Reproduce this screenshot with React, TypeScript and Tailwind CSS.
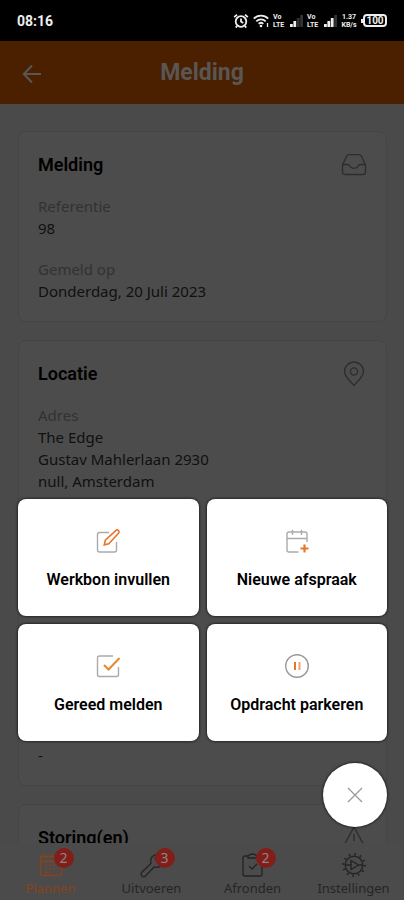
import React from 'react';

interface Field {
  label: string;
  lines: string[];
}

const melding: Field[] = [
  { label: 'Referentie', lines: ['98'] },
  { label: 'Gemeld op', lines: ['Donderdag, 20 Juli 2023'] },
];

// Empty strings keep their row, so unfilled fields still take up space
const locatie: Field[] = [
  { label: 'Adres', lines: ['The Edge', 'Gustav Mahlerlaan 2930', 'null, Amsterdam'] },
  { label: '', lines: [''] },
  { label: '', lines: ['', 'willem hendriks'] },
  { label: '', lines: [''] },
  { label: '', lines: ['-'] },
];

const VoLte = () => (
  <div className="w-[13px] font-[Roboto] text-[7px] leading-[8px] font-bold">
    <div>Vo</div>
    <div>LTE</div>
  </div>
);

const Signal = ({ bars }: { bars: number }) => (
  <svg className="w-[13px] h-3" viewBox="0 0 13 12">
    {[0, 1, 2, 3].map((i) => (
      <rect key={i} x={i * 3.4} y={9 - i * 3} width="2.8" height={3 + i * 3} fill={i < bars ? '#eee' : '#333'} />
    ))}
  </svg>
);

const StatusBar = () => (
  <div className="h-[41px] shrink-0 bg-black text-[#eee] flex items-center justify-between px-[17px]">
    <span className="font-[Roboto] text-sm font-bold">08:16</span>
    <div className="flex items-center gap-1">
      <svg className="w-4 h-4" viewBox="0 0 16 16" fill="none" stroke="currentColor" strokeWidth="1.8">
        <circle cx="8" cy="8.5" r="5.3" />
        <path d="M8 5.5v3l2.2 1.6M1.2 4.2 4 1.6M14.8 4.2 12 1.6M4 13l-1.2 1.6M12 13l1.2 1.6" />
      </svg>
      <svg className="w-4 h-4" viewBox="0 0 16 16" fill="none" stroke="currentColor" strokeWidth="1.8">
        <path d="M0.8 5.6c4-4 10.4-4 14.4 0M3.3 8.3c2.7-2.6 6.7-2.6 9.4 0M5.7 10.8c1.4-1.3 3.2-1.3 4.6 0" />
        <circle cx="8" cy="13" r="1.3" fill="currentColor" stroke="none" />
        <path d="M14.5 10v4" strokeWidth="1.3" />
      </svg>
      <VoLte />
      <Signal bars={2} />
      <VoLte />
      <Signal bars={3} />
      <div className="w-4 text-center font-[Roboto] text-[7px] leading-[8px] font-bold">
        <div>1.37</div>
        <div>KB/s</div>
      </div>
      <div className="flex items-center">
        <div className="w-[2px] h-1 bg-current" />
        <div className="w-6 h-[13px] rounded-sm border-2 border-current font-[Roboto] text-[10px] leading-[9px] font-bold text-center">100</div>
      </div>
    </div>
  </div>
);

const Card = ({ title, icon, fields }: { title: string; icon: React.ReactNode; fields: Field[] }) => (
  <section className="rounded-lg border border-[#454545] bg-[#4c4c4c] p-[19px]">
    <div className="flex items-center justify-between mb-4 text-[#2c2c2c]">
      <h2 className="font-[Roboto] text-lg leading-7 font-semibold text-black">{title}</h2>
      {icon}
    </div>
    <dl className="flex flex-col gap-[19px] text-[15px] leading-[22px]">
      {fields.map((field, i) => (
        <div key={i}>
          <dt className="min-h-[22px] text-[#323232]">{field.label}</dt>
          {field.lines.map((line, j) => (
            <dd key={j} className="min-h-[22px] text-[#101010]">{line}</dd>
          ))}
        </div>
      ))}
    </dl>
  </section>
);

const InboxIcon = () => (
  <svg className="w-[26px] h-[26px]" viewBox="0 0 26 26" fill="none" stroke="currentColor" strokeWidth="1.3" strokeLinejoin="round">
    <path d="M1.5 13 5.2 5q.8-2.300 3-2.300h9.600q2.200 0 3 2.300l3.700 8v7q0 2.500-2.500 2.500H4Q1.500 22.500 1.500 20z" />
    <path d="M1.500 12.500H6q2 0 3 1.800t2.500 1.800h3q1.600 0 2.500-1.800t3-1.800h4.500" />
  </svg>
);

const PinIcon = () => (
  <svg className="w-[26px] h-[26px]" viewBox="0 0 26 26" fill="none" stroke="currentColor" strokeWidth="1.3" strokeLinejoin="round">
    <path d="M13 24.500C9.500 20.500 3.500 15.500 3.500 10.500a9.500 9.500 0 0 1 19 0c0 5-6 10-9.500 14z" />
    <circle cx="13" cy="10.500" r="3.600" />
  </svg>
);

const WarningIcon = () => (
  <svg className="w-[26px] h-[26px]" viewBox="0 0 26 26" fill="none" stroke="currentColor" strokeWidth="1.3" strokeLinejoin="round">
    <path d="M13 2 25 24H1z" />
    <path d="M13 9v7M13 19v1.5" />
  </svg>
);

const actions = [
  {
    label: 'Werkbon invullen',
    icon: (
      <>
        <path d="M14 4.500H4.500q-2 0-2 2V22q0 2 2 2h15q2 0 2-2V14" stroke="#aaa" />
        <path d="m9.300 16.800 1-4.600L21 2.300q1.300-1 2.500.2t.2 2.500L13.800 15.700z" stroke="#e8762a" strokeWidth="1.6" />
      </>
    ),
  },
  {
    label: 'Nieuwe afspraak',
    icon: (
      <>
        <path d="M14.500 24H5q-2 0-2-2V6q0-2 2-2h16q2 0 2 2v8M3 10.500h20M8.500 2v5M17.500 2v5" stroke="#aaa" />
        <path d="M20.500 16.500v8M16.500 20.500h8" stroke="#e8762a" strokeWidth="2.2" />
      </>
    ),
  },
  {
    label: 'Gereed melden',
    icon: (
      <>
        <path d="M18 3H4.500q-2 0-2 2v16.500q0 2 2 2h17q2 0 2-2V14" stroke="#aaa" />
        <path d="m9 12 4.500 4.500L24.500 5" stroke="#e58a2e" strokeWidth="2" />
      </>
    ),
  },
  {
    label: 'Opdracht parkeren',
    icon: (
      <>
        <circle cx="13" cy="13" r="11.300" stroke="#999" />
        <path d="M11 9v8" stroke="#e8762a" strokeWidth="2" />
        <path d="M15.500 9v8" stroke="#f0a173" strokeWidth="2" />
      </>
    ),
  },
];

const tabs = [
  {
    label: 'Plannen',
    count: 2,
    color: 'text-[#8a4218]',
    icon: (
      <>
        <path d="M2.500 4.500h21v17q0 2-2 2h-17q-2 0-2-2zM2.500 9.500h21" />
        <path d="M7 1.500v5M13 1.500v5M19 1.500v5" />
        <path d="M7 13.500h12M7 17h12M7 20.300h8" strokeDasharray="2 2" />
      </>
    ),
  },
  {
    label: 'Uitvoeren',
    count: 3,
    color: 'text-[#252525]',
    icon: <path d="M2.500 20.500 12 11.500C10.500 6.500 14 2 19 2.500l-3 4 3 3.500 5-1.500c0 5-4 8-9 6.500L6 24.500q-1.500 1-3-.5t-.5-3.500z" />,
  },
  {
    label: 'Afronden',
    count: 2,
    color: 'text-[#252525]',
    icon: (
      <>
        <path d="M8 4H5Q3 4 3 6v16q0 2 2 2h15q2 0 2-2V6q0-2-2-2h-3M8 6V4q4.500-4 9 0v2z" />
        <path d="m9 14 3 3 5-5" />
      </>
    ),
  },
  {
    label: 'Instellingen',
    count: 0,
    color: 'text-[#252525]',
    icon: (
      <>
        <circle cx="13" cy="13" r="8.800" />
        <circle cx="13" cy="13" r="10.700" strokeWidth="2.4" strokeDasharray="1.6 4" />
        <path d="M10 8.500 17.500 13 10 17.500zM4.500 13H10M17.500 13h4" />
      </>
    ),
  },
];

export default function App() {
  return (
    <div className="relative h-screen overflow-hidden flex flex-col bg-[#4a4a4a] font-['Noto_Sans',sans-serif]">
      <StatusBar />

      <header className="h-[63px] shrink-0 bg-[#4a2000] text-[#595653] grid grid-cols-[1fr_auto_1fr] items-center px-[22px] pt-[2px]">
        <button aria-label="Terug" className="w-5 h-5">
          <svg className="w-5 h-5" viewBox="0 0 20 20" fill="none" stroke="currentColor" strokeWidth="2">
            <path d="M19 10H2M10 1.500 1.800 10l8.200 8.500" />
          </svg>
        </button>
        <h1 className="font-[Roboto] text-[23px] font-bold">Melding</h1>
      </header>

      <main className="flex-1 min-h-0 overflow-hidden pl-[18px] pr-[17px] pt-[27px] flex flex-col gap-[18px] *:shrink-0">
        <Card title="Melding" icon={<InboxIcon />} fields={melding} />
        <Card title="Locatie" icon={<PinIcon />} fields={locatie} />
        <Card title="Storing(en)" icon={<WarningIcon />} fields={[]} />
      </main>

      <nav className="h-[57px] shrink-0 grid grid-cols-4 bg-[#4b4b4b]">
        {tabs.map((tab) => (
          <a key={tab.label} href="#" className={`flex flex-col items-center pt-[9px] ${tab.color}`}>
            <span className="relative">
              <svg className="w-[26px] h-[26px]" viewBox="0 0 26 26" fill="none" stroke="currentColor" strokeWidth="1.4">
                {tab.icon}
              </svg>
              {tab.count > 0 && (
                <span className="absolute -top-1 left-4 w-5 h-5 rounded-full bg-[#821e1a] text-[#8f8583] text-sm leading-5 text-center">
                  {tab.count}
                </span>
              )}
            </span>
            <span className="text-[13px] leading-5">{tab.label}</span>
          </a>
        ))}
      </nav>

      <div className="absolute inset-x-0 bottom-[73px] pl-[18px] pr-[17px] flex flex-col items-end gap-[22px]">
        <div className="w-full grid grid-cols-2 gap-2">
          {actions.map((action) => (
            <button
              key={action.label}
              className="h-[117px] rounded-lg bg-white text-black shadow-[0_0_3px_#000] flex flex-col items-center justify-center gap-[14px] pt-1"
            >
              <svg className="w-[26px] h-[26px]" viewBox="0 0 26 26" fill="none" strokeWidth="1.4">
                {action.icon}
              </svg>
              <span className="font-[Roboto] text-base leading-6 font-semibold">{action.label}</span>
            </button>
          ))}
        </div>
        <button aria-label="Sluiten" className="w-16 h-16 rounded-full bg-white shadow-[0_0_3px_#000] flex items-center justify-center">
          <svg className="w-4 h-4" viewBox="0 0 16 16" fill="none" stroke="#999" strokeWidth="1.3">
            <path d="m1 1 14 14M15 1 1 15" />
          </svg>
        </button>
      </div>
    </div>
  );
}
